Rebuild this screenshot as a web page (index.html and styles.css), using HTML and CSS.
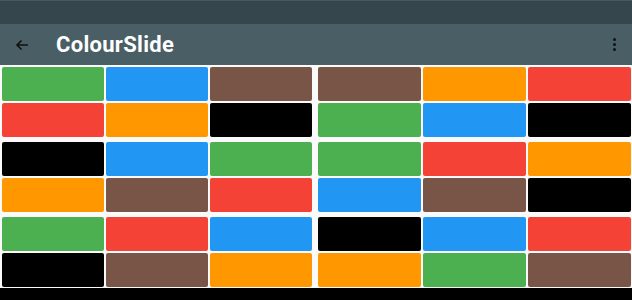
FILE: index.html
```html
<!DOCTYPE html>
<html>
   <head>
      <meta charset="UTF-8">
      <meta name="viewport" content="width=device-width, initial-scale=1.0"/>
      <title>ColourSlide</title>
      <link rel="stylesheet" href="styles.css">
   </head>
   <body>
      <div class="status-bar"></div>

      <header class="app-bar">
         <svg class="back" width="14" height="12" viewBox="0 0 14 12">
            <path d="M13 6H2M6.5 1.5L2 6l4.5 4.5" fill="none" stroke="#111" stroke-width="1.6"/>
         </svg>
         <h1 class="title">ColourSlide</h1>
         <span class="menu"><i></i><i></i><i></i></span>
      </header>

      <main class="board">
         <div class="group">
            <div class="tile green"></div><div class="tile blue"></div><div class="tile brown"></div>
            <div class="tile red"></div><div class="tile orange"></div><div class="tile black"></div>
         </div>
         <div class="group">
            <div class="tile brown"></div><div class="tile orange"></div><div class="tile red"></div>
            <div class="tile green"></div><div class="tile blue"></div><div class="tile black"></div>
         </div>
         <div class="group">
            <div class="tile black"></div><div class="tile blue"></div><div class="tile green"></div>
            <div class="tile orange"></div><div class="tile brown"></div><div class="tile red"></div>
         </div>
         <div class="group">
            <div class="tile green"></div><div class="tile red"></div><div class="tile orange"></div>
            <div class="tile blue"></div><div class="tile brown"></div><div class="tile black"></div>
         </div>
         <div class="group">
            <div class="tile green"></div><div class="tile red"></div><div class="tile blue"></div>
            <div class="tile black"></div><div class="tile brown"></div><div class="tile orange"></div>
         </div>
         <div class="group">
            <div class="tile black"></div><div class="tile blue"></div><div class="tile red"></div>
            <div class="tile orange"></div><div class="tile green"></div><div class="tile brown"></div>
         </div>
      </main>
   </body>
</html>
```

FILE: styles.css
```css
*
{
   box-sizing: border-box;
}

body
{
   margin: 0;
   background: #000;
   font-family: Roboto, "Liberation Sans", sans-serif;
}

.status-bar
{
   height: 24px;
   background: #36464d;
   border-top: 1px solid #48585f;
}

.app-bar
{
   height: 41px;
   display: flex;
   align-items: center;
   padding: 0 16px 0 15px;
   background: #4a5e65;
}

.back
{
   display: block;
   margin-top: 1px;
}

.title
{
   flex: 1;
   margin: 0 0 0 27px;
   color: #fff;
   font-size: 22px;
   font-weight: 700;
   letter-spacing: 0.3px;
}

.menu
{
   display: flex;
   flex-direction: column;
   gap: 2px;
}

.menu i
{
   display: block;
   width: 3px;
   height: 3px;
   border-radius: 50%;
   background: #111;
}

.board
{
   display: grid;
   grid-template-columns: 310px 1fr;
   column-gap: 6px;
   row-gap: 5px;
   padding: 2px 1px 1px 2px;
   background: #fafafa;
}

.group
{
   display: grid;
   grid-template-columns: repeat(3, 1fr);
   gap: 2px;
}

.tile
{
   height: 34px;
   border-radius: 2px;
}

.green { background: #4caf50; }
.blue { background: #2196f3; }
.brown { background: #795548; }
.red { background: #f44336; }
.orange { background: #ff9800; }
.black { background: #000; }
```
